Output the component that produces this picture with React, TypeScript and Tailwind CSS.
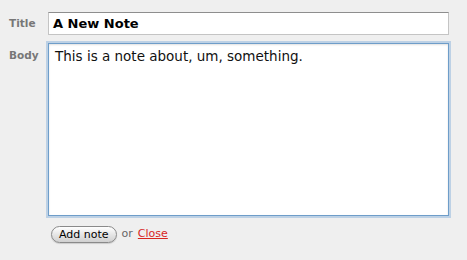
export default function App() {
  return (
    <div className="h-[260px] w-[467px] bg-[#efefef] font-['DejaVu_Sans',sans-serif]">
      <div className="pt-3 pl-[9px] pr-[18px]">
        {/* Title */}
        <div className="flex items-start">
          <label className="w-[39px] pt-[4px] text-[10.5px] font-bold text-[#777]">
            Title
          </label>
          <div className="flex h-[23px] flex-1 items-center border border-[#c4c4c4] border-t-[#8e8e8e] bg-white pl-[4px] text-[13px] font-bold text-black">
            A New Note
          </div>
        </div>

        {/* Body */}
        <div className="mt-[8px] flex items-start">
          <label className="w-[39px] pt-[5px] text-[10.5px] font-bold text-[#777]">
            Body
          </label>
          <div className="h-[173px] flex-1 border border-[#6e9dc9] bg-white px-[6px] pt-[2px] text-[13.5px] text-[#111] shadow-[0_0_0_2px_rgba(140,180,220,0.5),inset_0_1px_2px_rgba(0,0,0,0.12)]">
            This is a note about, um, something.
          </div>
        </div>

        {/* Actions */}
        <div className="mt-[10px] flex items-center gap-[5px] pl-[42px] text-[11px]">
          <button className="h-[17px] rounded-full border border-[#8a8a8a] bg-gradient-to-b from-[#ffffff] via-[#e6e6e6] to-[#d0d0d0] px-[7px] text-[11px] leading-none text-black shadow-[0_1px_1px_rgba(0,0,0,0.15)]">
            Add note
          </button>
          <span className="text-[#666]">or</span>
          <a href="#" className="text-[#d8261f] underline">
            Close
          </a>
        </div>
      </div>
    </div>
  );
}
